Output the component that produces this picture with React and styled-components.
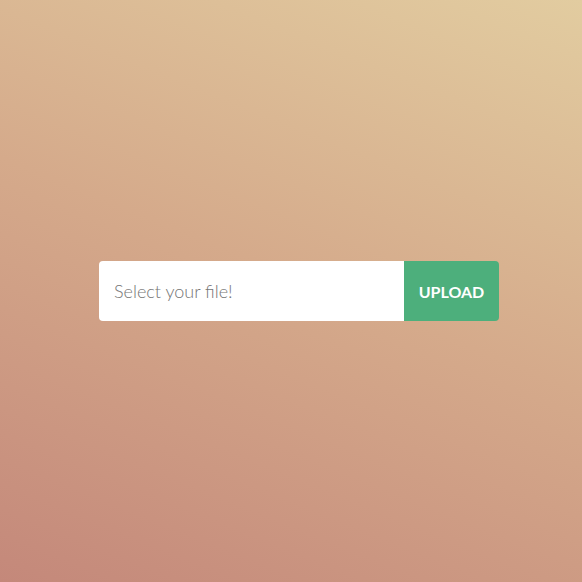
import styled, { createGlobalStyle } from "styled-components";

const GlobalStyle = createGlobalStyle`
  html, body {
    margin: 0;
    padding: 0;
    height: 100%;
  }
  body {
    font-family: Lato, "Open Sans", sans-serif;
  }
  #root {
    height: 100%;
  }
`;

const App = () => {
  return (
    <Page>
      <GlobalStyle />
      <UploadForm onSubmit={(e) => e.preventDefault()}>
        <FileField type="text" placeholder="Select your file!" readOnly />
        <UploadButton type="submit">Upload</UploadButton>
      </UploadForm>
    </Page>
  );
};

export default App;

const Page = styled.div`
  height: 100vh;
  width: 100vw;
  display: flex;
  align-items: center;
  justify-content: center;
  background: linear-gradient(
    22deg,
    #c4887a 0%,
    #d5aa8b 52%,
    #e2cca0 100%
  );
`;

const UploadForm = styled.form`
  display: flex;
  width: 400px;
  height: 60px;
  border-radius: 4px;
  overflow: hidden;
  margin-left: 16px;
`;

const FileField = styled.input`
  flex: 1;
  border: none;
  outline: none;
  padding: 0 15px;
  background: #fff;
  font-family: Lato, sans-serif;
  font-weight: 300;
  font-size: 18px;
  color: #555;

  ::placeholder {
    color: #9a9a9a;
  }
`;

const UploadButton = styled.button`
  width: 95px;
  border: none;
  background: #4daf7c;
  color: #fff;
  font-family: Lato, sans-serif;
  font-weight: 700;
  font-size: 16px;
  text-transform: uppercase;
  cursor: pointer;
`;
